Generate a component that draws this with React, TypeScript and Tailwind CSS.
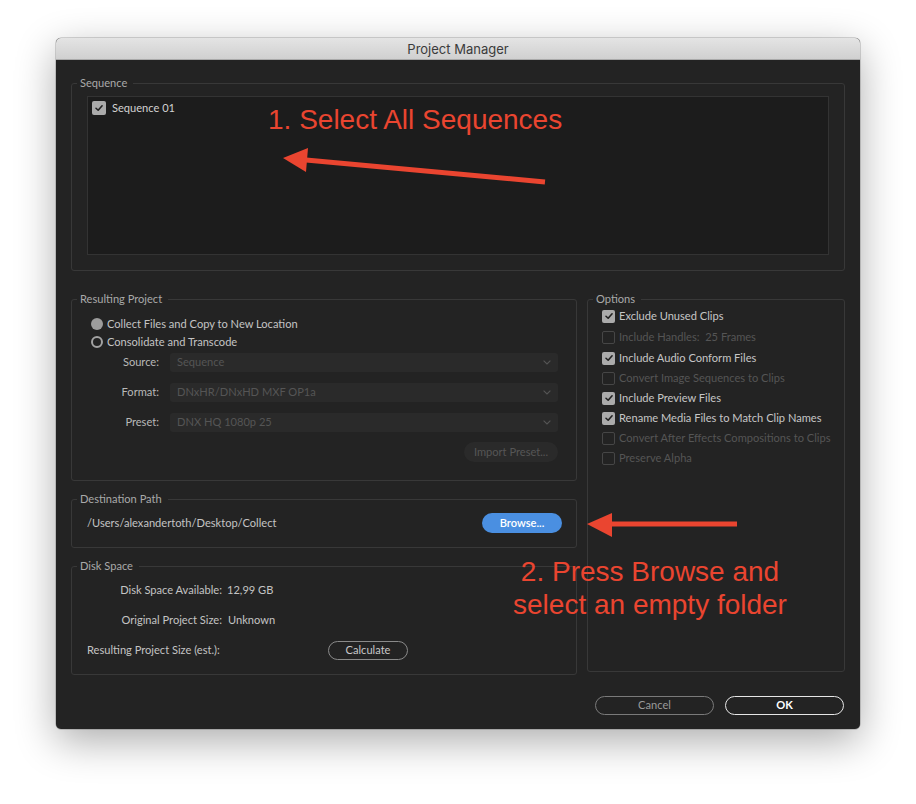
import React from "react";

const RED = "#ea4530";

function Check({ on, size = 13 }: { on?: boolean; size?: number }) {
  const box = size === 14 ? "h-[14px] w-[14px]" : "h-[13px] w-[13px]";
  if (!on) return <span className={`${box} shrink-0 rounded-[2px] border border-[#464646]`} />;
  return (
    <span className={`${box} flex shrink-0 items-center justify-center rounded-[2px] bg-[#ababab]`}>
      <svg viewBox="0 0 12 12" className="h-[10px] w-[10px]">
        <path d="M2.4 6.3 L5 8.7 L9.7 3.3" fill="none" stroke="#222" strokeWidth="1.9" strokeLinecap="round" strokeLinejoin="round" />
      </svg>
    </span>
  );
}

function Group({
  title,
  className,
  inner,
  children,
}: {
  title: string;
  className: string;
  inner: string;
  children: React.ReactNode;
}) {
  return (
    <fieldset className={`rounded-[3px] border border-[#383838] ${className}`}>
      <legend className="ml-[5px] pl-[3px] pr-[6px] text-[11.1px] leading-[14px] text-[#a9a9a9]">{title}</legend>
      <div className={inner}>{children}</div>
    </fieldset>
  );
}

function Select({ label, value }: { label: string; value: string }) {
  return (
    <div className="flex h-[19px] items-center">
      <span className="w-[88px] pr-[1px] text-right text-[#b8b8b8]">{label}</span>
      <div className="ml-[10px] flex h-[19px] flex-1 items-center justify-between rounded-[3px] bg-[#2a2a2a] pl-[7px] pr-[7px] text-[#555]">
        <span>{value}</span>
        <svg viewBox="0 0 8 5" className="h-[5px] w-[8px]">
          <path d="M0.6 0.6 L4 4 L7.4 0.6" fill="none" stroke="#555" strokeWidth="1.1" />
        </svg>
      </div>
    </div>
  );
}

const options: [string, boolean, boolean][] = [
  ["Exclude Unused Clips", true, true],
  ["Include Handles:  25 Frames", false, false],
  ["Include Audio Conform Files", true, true],
  ["Convert Image Sequences to Clips", false, false],
  ["Include Preview Files", true, true],
  ["Rename Media Files to Match Clip Names", true, true],
  ["Convert After Effects Compositions to Clips", false, false],
  ["Preserve Alpha", false, false],
];

export default function App() {
  return (
    <div className="min-h-screen bg-white pl-[56px] pt-[38px] font-['Lato',sans-serif] text-[11.1px]">
      <div className="relative flex h-[691px] w-[804px] flex-col overflow-hidden rounded-[5px] bg-[#232323] shadow-[0_0_0_0.5px_rgba(0,0,0,0.3),0_12px_40px_rgba(0,0,0,0.33)]">
        {/* title bar */}
        <div className="flex h-[22px] shrink-0 items-center justify-center border-b border-[#a9a9a9] bg-gradient-to-b from-[#e4e4e4] to-[#d0d0d0] pt-[2px] font-['Inter',sans-serif] text-[13px] text-[#3b3b3b]">
          Project Manager
        </div>

        <div className="flex flex-1 flex-col px-[15px] pt-[16px]">
          <Group title="Sequence" className="h-[195px]" inner="px-[15px] pb-[15px] pt-[6px]">
            <div className="h-[159px] border border-[#333] bg-[#1c1c1c] pl-[4px] pt-[3px]">
              <div className="flex items-center gap-[6px] text-[#d2d2d2]">
                <Check on size={14} />
                <span>Sequence 01</span>
              </div>
            </div>
          </Group>

          <div className="mt-[21px] flex gap-[10px]">
            <div className="flex w-[506px] flex-col gap-[11px]">
              <Group title="Resulting Project" className="h-[189px]" inner="pr-[18px] pt-[9px]">
                <div className="flex h-[18px] items-center pl-[19px] text-[#c4c4c4]">
                  <span className="h-[12px] w-[12px] rounded-full bg-[#9c9c9c]" />
                  <span className="ml-[4px]">Collect Files and Copy to New Location</span>
                </div>
                <div className="flex h-[18px] items-center pl-[19px] text-[#c4c4c4]">
                  <span className="h-[12px] w-[12px] rounded-full border-2 border-[#a3a3a3]" />
                  <span className="ml-[4px]">Consolidate and Transcode</span>
                </div>
                <div className="mt-[2px] flex flex-col gap-[11px]">
                  <Select label="Source:" value="Sequence" />
                  <Select label="Format:" value="DNxHR/DNxHD MXF OP1a" />
                  <Select label="Preset:" value="DNX HQ 1080p 25" />
                </div>
                <div className="mt-[10px] flex justify-end">
                  <span className="flex h-[20px] w-[94px] items-center justify-center rounded-full bg-[#2a2a2a] text-[#565656]">
                    Import Preset...
                  </span>
                </div>
              </Group>

              <Group title="Destination Path" className="h-[56px]" inner="pl-[15px] pr-[14px] pt-[7px]">
                <div className="flex h-[20px] items-center justify-between">
                  <span className="text-[#c4c4c4]">/Users/alexandertoth/Desktop/Collect</span>
                  <span className="flex h-[20px] w-[80px] items-center justify-center rounded-full bg-[#4a8fe1] font-semibold text-white">
                    Browse...
                  </span>
                </div>
              </Group>

              <Group title="Disk Space" className="h-[116px]" inner="pt-[7px] text-[#c4c4c4]">
                <div className="flex h-[20px] items-center">
                  <span className="w-[150px] text-right">Disk Space Available:</span>
                  <span className="ml-[5px]">12,99 GB</span>
                </div>
                <div className="mt-[10px] flex h-[20px] items-center">
                  <span className="w-[150px] text-right">Original Project Size:</span>
                  <span className="ml-[6px]">Unknown</span>
                </div>
                <div className="mt-[10px] flex h-[20px] items-center pl-[15px]">
                  <span className="w-[241px]">Resulting Project Size (est.):</span>
                  <span className="flex h-[19px] w-[80px] items-center justify-center rounded-full border-[1.5px] border-[#8a8a8a] text-[#c8c8c8]">
                    Calculate
                  </span>
                </div>
              </Group>
            </div>

            <Group title="Options" className="h-[380px] w-[258px]" inner="pl-[14px]">
              {options.map(([t, on, enabled], i) => (
                <div
                  key={t}
                  className={`flex h-[20px] items-center gap-[4px] ${i === 1 || i === 2 ? "mt-[1px]" : ""} ${
                    enabled ? "text-[#c6c6c6]" : "text-[#555]"
                  }`}
                >
                  <Check on={on} />
                  <span className="whitespace-pre">{t}</span>
                </div>
              ))}
            </Group>
          </div>

          <div className="mt-[21px] flex justify-end gap-[11px] pr-[1px]">
            <span className="flex h-[19px] w-[119px] items-center justify-center rounded-full border-[1.5px] border-[#7a7a7a] text-[#9a9a9a]">
              Cancel
            </span>
            <span className="flex h-[19px] w-[119px] items-center justify-center rounded-full border-[1.5px] border-[#e6e6e6] font-bold text-white">
              OK
            </span>
          </div>
        </div>

        {/* annotations */}
        <svg className="pointer-events-none absolute inset-0" width="804" height="691">
          <line x1="489" y1="144" x2="250" y2="122" stroke={RED} strokeWidth="5" />
          <polygon points="227,120 252,110 250,134" fill={RED} />
          <line x1="681" y1="486" x2="553" y2="486" stroke={RED} strokeWidth="5" />
          <polygon points="531,486 556,475 556,499" fill={RED} />
        </svg>
        <div className="pointer-events-none absolute left-[212px] top-[68px] whitespace-nowrap font-['Liberation_Sans',Arial,sans-serif] text-[28px] leading-none text-[#ea4530]">
          1. Select All Sequences
        </div>
        <div className="pointer-events-none absolute left-[444px] top-[517px] w-[300px] whitespace-nowrap text-center font-['Liberation_Sans',Arial,sans-serif] text-[28px] leading-[33px] text-[#ea4530]">
          2. Press Browse and
          <br />
          select an empty folder
        </div>
      </div>
    </div>
  );
}
